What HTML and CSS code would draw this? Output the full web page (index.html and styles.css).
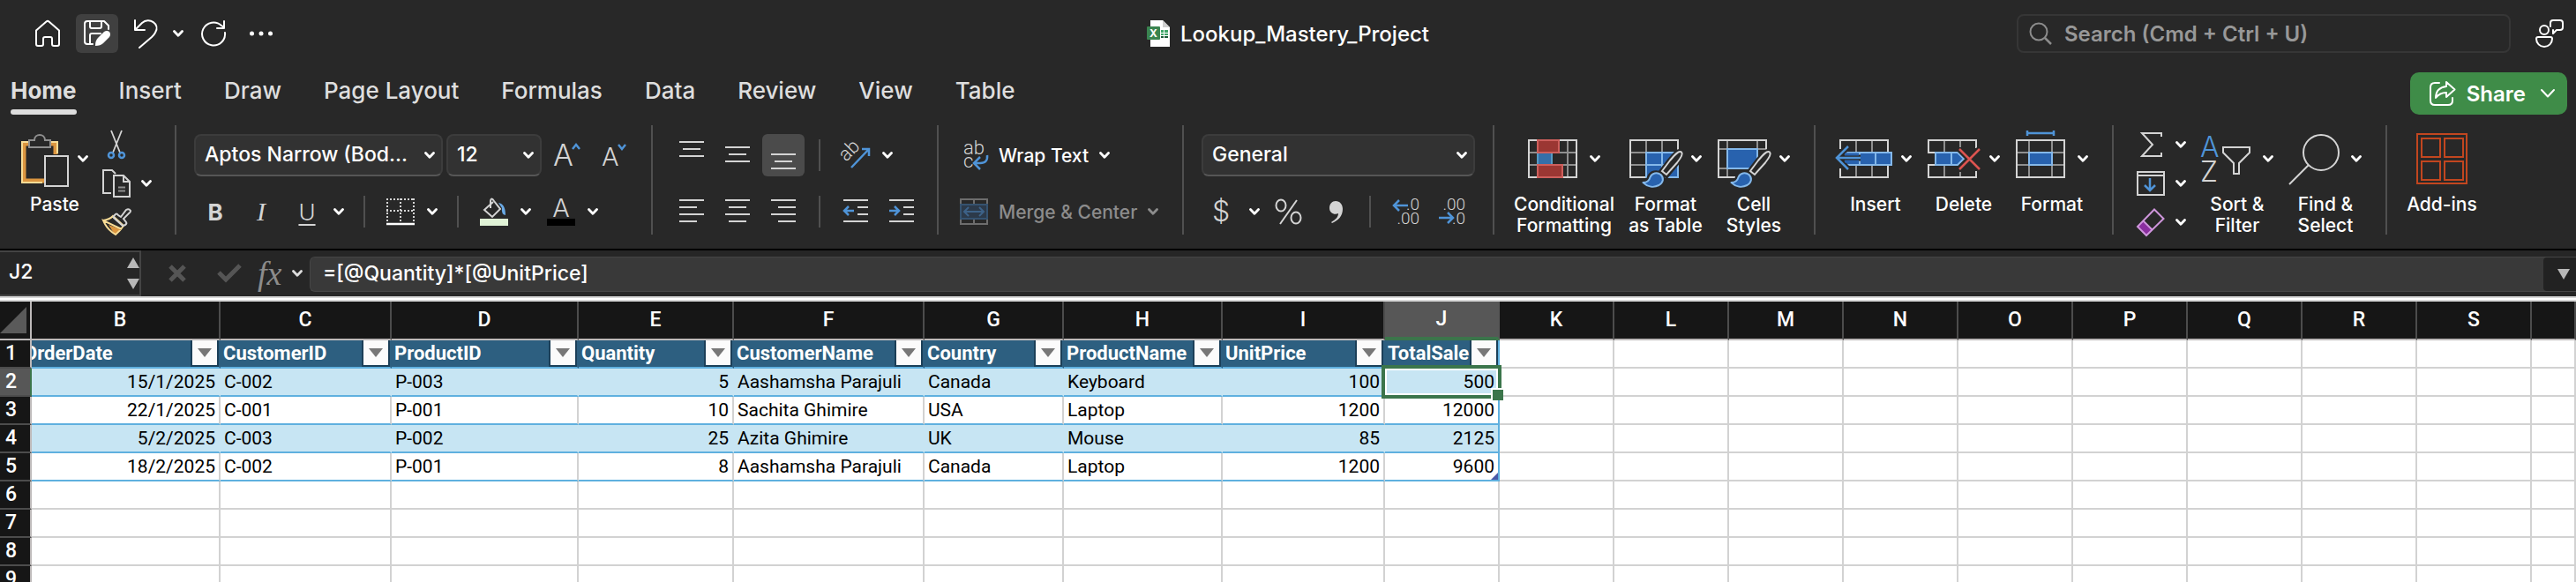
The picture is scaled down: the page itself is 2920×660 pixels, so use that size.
FILE: index.html
```html
<!DOCTYPE html>
<html lang="en">
<head>
<meta charset="utf-8">
<title>Lookup_Mastery_Project</title>
<link rel="stylesheet" href="styles.css">
</head>
<body>
<svg class="defs" aria-hidden="true">
  <symbol id="chev" viewBox="0 0 12 8"><path d="M1.5 1.5 6 6.2l4.500-4.700" fill="none" stroke="currentColor" stroke-width="2.800" stroke-linecap="round" stroke-linejoin="round"/></symbol>
  <symbol id="brush" viewBox="0 0 64 68">
    <path d="M59 24.500c2 2-1 7-5 12L42 51l-6-4 10-13c5-6 10-12 13-9.500z" fill="#282828" stroke="#282828" stroke-width="6"/>
    <path d="M15 59c5 0 7-2 8-6 2-5 8-6 12-3 4 4 3 10-2 12-6 3-13 2-18-3z" fill="#282828" stroke="#282828" stroke-width="6"/>
    <path d="M59 24.500c2 2-1 7-5 12L42 50l-5-4 9-12c5-6 10-12 13-9.500z" fill="#282828" stroke="#d4d4d4" stroke-width="2"/>
    <path d="M15.500 59c4.500 0 7-2 8-6 2-5 8-6 12-3 4 4 3 9-2 12-6 3-13 2-18-3z" fill="#2862ae" stroke="#84b8ea" stroke-width="2" stroke-linejoin="round"/>
  </symbol>
</svg>

<header class="titlebar">
  <div class="quick">
    <button class="plain" aria-label="Home"><svg width="28" height="32" viewBox="0 0 28 32"><path class="w" d="M1 12.500 12.500 2.500q1.500-1.200 3 0L27 12.500V28q0 2-2 2h-4q-2 0-2-2v-6q0-2-2-2h-6q-2 0-2 2v6q0 2-2 2H3q-2 0-2-2z"/></svg></button>
    <button class="plain save" aria-label="Save"><svg width="32" height="32" viewBox="0 0 32 32"><path class="w" d="M11 28H5q-3 0-3-3V5q0-3 3-3h19l5 5v4M8 2v6q0 2 2 2h9q2 0 2-2V2M8 28V18q0-2 2-2h10"/><path d="M14 30q0-6 3-9l7-7q3-2 6 0 2 3 0 6l-7 7q-3 3-9 3z" fill="#fff"/></svg></button>
    <button class="plain" aria-label="Undo"><svg width="26" height="34" viewBox="0 0 26 34"><path class="w" d="M1 2v11h11M1.500 12.500 9 5c8-7 21 1 15 11-1 2-2 3-4 5L6 33"/></svg></button>
    <button class="plain" aria-label="Undo history"><svg class="chev"><use href="#chev"/></svg></button>
    <button class="plain" aria-label="Redo"><svg width="32" height="32" viewBox="0 0 32 32"><path class="w" d="M29 15A13 13 0 1 1 25 7l3 2M28 2v8h-8"/></svg></button>
    <button class="plain" aria-label="More"><svg width="40" height="8" viewBox="0 0 40 8" fill="#fff"><circle cx="9.500" cy="4" r="2.500"/><circle cx="20" cy="4" r="2.500"/><circle cx="30.500" cy="4" r="2.500"/></svg></button>
  </div>
  <h1 class="doc">
    <svg width="26" height="30" viewBox="0 0 26 30"><path d="M4 0h14l8 8v22H4z" fill="#fff"/><path d="M18 0v8h8z" fill="#cfcfcf"/><path d="M16 11h3v3h-3zM20 11h4v3h-4zM16 15h3v2h-3zM20 15h4v2h-4z" fill="#3fa568"/><path d="M16 18h3v2h-3zM20 18h4v2h-4z" fill="#1d5a38"/><rect y="7" width="15" height="15" rx="1" fill="#3a8450"/><text x="7.500" y="19" class="t-x">X</text></svg>
    <span>Lookup_Mastery_Project</span>
  </h1>
  <div class="right">
    <label class="search">
      <svg width="26" height="26" viewBox="0 0 26 26"><circle cx="11" cy="11" r="9.500" fill="none" stroke="#8c8c8c" stroke-width="2"/><path d="m18 18 7 7" stroke="#8c8c8c" stroke-width="2.500"/></svg>
      <input type="text" placeholder="Search (Cmd + Ctrl + U)" aria-label="Search">
    </label>
    <button class="plain" aria-label="Comments"><svg width="32" height="34" viewBox="0 0 32 34"><circle class="w" cx="10" cy="13" r="5"/><path class="w" d="M3 21h14q2 0 2 2c0 5-4 9-9 9s-9-4-9-9q0-2 2-2zM17 9V5q0-3 3-3h8q3 0 3 3v5q0 3-3 3h-4l-4 4v-4"/></svg></button>
  </div>
</header>

<nav class="tabs">
  <a class="tab on" href="#home">Home</a>
  <a class="tab" href="#insert">Insert</a>
  <a class="tab" href="#draw">Draw</a>
  <a class="tab" href="#layout">Page Layout</a>
  <a class="tab" href="#formulas">Formulas</a>
  <a class="tab" href="#data">Data</a>
  <a class="tab" href="#review">Review</a>
  <a class="tab" href="#view">View</a>
  <a class="tab" href="#table">Table</a>
  <button class="share"><svg width="30" height="30" viewBox="0 0 30 30"><path class="w" d="M11 3H6Q1 3 1 8v15q0 5 5 5h15q5 0 5-5v-3"/><path class="w" d="M19 2v5C11 8 7 12 7 20c3-4 6-6 12-6v5l9.500-8.500z" stroke-linejoin="round"/></svg><span>Share</span><svg width="16" height="10" viewBox="0 0 16 10"><path class="w" d="m1 1 7 7.500L15 1"/></svg></button>
</nav>

<section class="ribbon">
  <div class="group big-group clip">
    <button class="big"><span class="pic"><svg width="54" height="64" viewBox="0 0 54 64"><path d="M26 57H3V15h36v12" fill="none" stroke="#dc9640" stroke-width="5"/><path d="M24 59H1V13h40v13" fill="none" stroke="#f8dc96" stroke-width="2"/><path d="M9 19v-8h6c0-8 12-8 12 0h6v8z" fill="#282828" stroke="#8f8f8f" stroke-width="2"/><path class="l" fill-opacity="1" d="M27 29h26v34H27z"/></svg><svg class="chev"><use href="#chev"/></svg></span><span>Paste</span></button>
    <div class="stack">
      <button class="plain" aria-label="Cut"><svg width="32" height="32" viewBox="0 0 32 32"><path d="M10 0 20 25M22 0 12 25" stroke="#d4d4d4" stroke-width="1.800"/><circle cx="10" cy="28" r="3" class="b"/><circle cx="22" cy="28" r="3" class="b"/></svg></button>
      <button class="plain split near" aria-label="Copy"><svg width="32" height="32" viewBox="0 0 32 32"><path class="l" d="M10 27H1V1h10l4 4M13 7h11l7 7v17H13zM24 7v7h7"/><path d="M18 20.500h8M18 24.500h8" stroke="#8f8f8f" stroke-width="2"/></svg><svg class="chev"><use href="#chev"/></svg></button>
      <button class="plain" aria-label="Format Painter"><svg width="32" height="32" viewBox="0 0 32 32"><path d="m7 19 14 5-7 6z" fill="#dc9640"/><path d="M1 14q7-1 11-5l12 11q-4 6-9 10Q5 24 1 14l21 10" fill="none" stroke="#f8dc96" stroke-width="2"/><path class="l" fill="#282828" d="M14 8q2-3 4 0l3 2 6-8q3-2 5 1 0 2-2 3l-6 6 3 4q1 2-1 3t-3 1L13 11q-1-1 1-3z"/></svg></button>
    </div>
  </div>

  <div class="group font">
    <div class="row">
      <span class="pick face"><select aria-label="Font"><option>Aptos Narrow (Bod...</option></select><svg class="chev"><use href="#chev"/></svg></span>
      <span class="pick size"><select aria-label="Font size"><option>12</option></select><svg class="chev"><use href="#chev"/></svg></span>
      <button class="plain grow" aria-label="Increase font size"><svg width="32" height="32" viewBox="0 0 32 32"><text x="0" y="28" class="t-a">A</text><path class="b" d="m22 9 4-5 4 5"/></svg></button>
      <button class="plain shrink" aria-label="Decrease font size"><svg width="32" height="32" viewBox="0 0 32 32"><text x="1" y="28" class="t-b">A</text><path class="b" d="m20 4 4 5 4-5"/></svg></button>
    </div>
    <div class="row tools">
      <div class="trio"><button class="plain cell bold">B</button><button class="plain cell ital">I</button><button class="plain cell split"><span class="under">U</span><svg class="chev"><use href="#chev"/></svg></button></div>
      <i class="sep"></i>
      <button class="plain split" aria-label="Borders"><svg width="32" height="32" viewBox="0 0 32 32"><path d="M0 2h32M0 15h32M1 1v28M16 1v28M31 1v28" fill="none" stroke="#d4d4d4" stroke-width="2" stroke-dasharray="2 2"/><path d="M0 30h32" stroke="#fff" stroke-width="2.500"/></svg><svg class="chev"><use href="#chev"/></svg></button>
      <i class="sep"></i>
      <div class="pair">
      <button class="plain split" aria-label="Fill colour"><svg width="32" height="32" viewBox="0 0 32 32"><path class="l" d="M15 5 5 14l9 8 9-9-7-9q-3-5-4 0v8"/><path d="M21 6q8 1 8 14-5-1-4-8z" fill="#6aaae6"/><path d="M0 24h32v8H0z" fill="#e0f2d6"/></svg><svg class="chev"><use href="#chev"/></svg></button>
      <button class="plain split" aria-label="Font colour"><svg width="32" height="32" viewBox="0 0 32 32"><text x="16" y="22" class="t-b mid">A</text><path d="M0 24h32v8H0z" fill="#000"/></svg><svg class="chev"><use href="#chev"/></svg></button>
      </div>
    </div>
  </div>

  <div class="group align">
    <div class="row">
      <div class="trio">
        <button class="tile" aria-label="Top align"><svg width="28" height="32" viewBox="0 0 28 32"><path class="l" d="M0 1h28M4 9h20M0 17h28"/></svg></button>
        <button class="tile" aria-label="Middle align"><svg width="28" height="32" viewBox="0 0 28 32"><path class="l" d="M0 7h28M4 15h20M0 23h28"/></svg></button>
        <button class="tile on" aria-label="Bottom align"><svg width="28" height="32" viewBox="0 0 28 32"><path class="l" d="M0 15h28M4 23h20M0 31h28"/></svg></button>
      </div>
      <i class="sep"></i>
      <button class="plain split" aria-label="Orientation"><svg width="32" height="32" viewBox="0 0 32 32"><text x="0" y="0" class="t-ab" transform="translate(5 24) rotate(-45)">ab</text><path class="b" d="M11 30 31 9M23 9h8v8"/></svg><svg class="chev"><use href="#chev"/></svg></button>
    </div>
    <div class="row">
      <div class="trio">
        <button class="tile" aria-label="Align left"><svg width="28" height="28" viewBox="0 0 28 28"><path class="l" d="M0 1h28M0 9h20M0 17h28M0 25h20"/></svg></button>
        <button class="tile" aria-label="Center"><svg width="28" height="28" viewBox="0 0 28 28"><path class="l" d="M0 1h28M4 9h20M0 17h28M4 25h20"/></svg></button>
        <button class="tile" aria-label="Align right"><svg width="28" height="28" viewBox="0 0 28 28"><path class="l" d="M0 1h28M8 9h20M0 17h28M8 25h20"/></svg></button>
      </div>
      <i class="sep"></i>
      <div class="indents">
      <button class="plain" aria-label="Decrease indent"><svg width="32" height="28" viewBox="0 0 32 28"><path class="l" d="M2 1h28M18 9h12M18 17h12M2 25h28"/><path class="b" d="M14 13H3M8 8l-5 5 5 5"/></svg></button>
      <button class="plain" aria-label="Increase indent"><svg width="32" height="28" viewBox="0 0 32 28"><path class="l" d="M2 1h28M18 9h12M18 17h12M2 25h28"/><path class="b" d="M2 13h11M8 8l5 5-5 5"/></svg></button>
      </div>
    </div>
  </div>

  <div class="group wrap">
    <button class="row line"><svg width="32" height="32" viewBox="0 0 32 32"><text x="4" y="15" class="t-ab">ab</text><text x="4" y="30" class="t-ab">c</text><path class="b" d="M31 16q1 9-8 9h-6M23 18l-7 7 7 7"/></svg><span>Wrap Text</span><svg class="chev"><use href="#chev"/></svg></button>
    <button class="row line off" disabled><svg width="32" height="32" viewBox="0 0 32 32"><path d="M1 8V2h30v6M16 2v6M1 24v6h30v-6M16 24v6" fill="none" stroke="#6d6d6d" stroke-width="2"/><path d="M1 8h30v16H1z" fill="#2c3a4a" stroke="#35526f" stroke-width="2"/><path d="M5 16h22M10 11l-5 5 5 5M22 11l5 5-5 5" fill="none" stroke="#3d6288" stroke-width="2"/></svg><span>Merge &amp; Center</span><svg class="chev"><use href="#chev"/></svg></button>
  </div>

  <div class="group number">
    <span class="pick kind"><select aria-label="Number format"><option>General</option></select><svg class="chev"><use href="#chev"/></svg></span>
    <div class="row nums">
      <button class="plain split" aria-label="Currency"><svg width="32" height="36" viewBox="0 0 32 36"><text x="16" y="29" class="t-n mid">$</text></svg><svg class="chev"><use href="#chev"/></svg></button>
      <button class="plain" aria-label="Percent"><svg width="32" height="32" viewBox="0 0 32 32"><g fill="none" stroke="#d4d4d4" stroke-width="2"><ellipse cx="8" cy="9" rx="5.500" ry="6.500"/><ellipse cx="25" cy="23" rx="5.500" ry="6.500"/><path d="M26 3 7 30"/></g></svg></button>
      <button class="plain" aria-label="Comma style"><svg width="32" height="32" viewBox="0 0 32 32"><path d="M16 4c5 0 8 4 8 9 0 8-5 13-12 16l-1-1c5-3 8-6 8-10-4 2-10 0-10-6 0-5 3-8 7-8z" fill="#d4d4d4"/></svg></button>
      <i class="sep"></i>
      <button class="plain" aria-label="Increase decimal"><svg width="32" height="32" viewBox="0 0 32 32"><text x="31" y="14" class="t-d">.0</text><text x="31" y="30" class="t-d">.00</text><path class="b" d="M18 9H2M8 3 2 9l6 6"/></svg></button>
      <button class="plain" aria-label="Decrease decimal"><svg width="32" height="32" viewBox="0 0 32 32"><text x="31" y="14" class="t-d">.00</text><text x="31" y="30" class="t-d">.0</text><path class="b" d="M1 23h16M11 17l6 6-6 6"/></svg></button>
    </div>
  </div>

  <div class="group big-group styles">
    <button class="big"><span class="pic"><svg width="56" height="64" viewBox="0 0 56 64"><path class="g" d="M11 11v42M45 11v42M1 25h54M1 39h54"/><path d="M28 26h16v12H28z" fill="#282828"/><path class="l" d="M1 11h54v42H1z"/><path d="M11 11h24v14H11zM11 39h28v14H11z" fill="#9b3733" stroke="#ce5f5c" stroke-width="2"/><path d="M10 26h18v12H10z" fill="#356fa9"/><path d="M11 26v12M27 26v12" stroke="#559bc4" stroke-width="2"/></svg><svg class="chev"><use href="#chev"/></svg></span><span>Conditional<br>Formatting</span></button>
    <button class="big"><span class="pic"><svg width="56" height="64" viewBox="0 0 56 64"><path class="g" d="M19 11v42M37 11v42M1 25h54M1 39h54"/><path class="l" d="M1 11h54v42H1z"/><path d="M19 25h36v28H19z" fill="#2862ae" stroke="#84b8ea" stroke-width="2"/><path d="M37 25v28M19 39h36" stroke="#84b8ea" stroke-width="2"/><use href="#brush" width="64" height="68"/></svg><svg class="chev"><use href="#chev"/></svg></span><span>Format<br>as Table</span></button>
    <button class="big"><span class="pic"><svg width="56" height="64" viewBox="0 0 56 64"><path class="g" d="M11 11v42M45 11v42M1 21h54M1 43h54"/><path class="l" d="M1 11h54v42H1z"/><path d="M11 21h34v22H11z" fill="#2862ae" stroke="#84b8ea" stroke-width="2"/><path d="M46 40 58 22v34H30z" fill="#282828"/><use href="#brush" width="64" height="68"/></svg><svg class="chev"><use href="#chev"/></svg></span><span>Cell<br>Styles</span></button>
  </div>

  <div class="group big-group cells">
    <button class="big"><span class="pic"><svg width="56" height="64" viewBox="0 0 56 64"><path class="g" d="M19 11v42M37 11v42"/><path class="l" d="M1 11h54v42H1z"/><path d="M-2 21h13v22H-2z" fill="#282828"/><path d="M5 25h54v14H5z" fill="#2862ae" stroke="#84b8ea" stroke-width="2"/><path d="M23 25v14M41 25v14" stroke="#84b8ea" stroke-width="2"/><path d="M24 31H-2M10 18-3 31l13 13" fill="none" stroke="#282828" stroke-width="7"/><path d="M6 27h16M6 35h16" stroke="#2862ae" stroke-width="3"/><path class="b" d="M24 31H-2M10 18-3 31l13 13"/></svg><svg class="chev"><use href="#chev"/></svg></span><span>Insert</span></button>
    <button class="big"><span class="pic"><svg width="56" height="64" viewBox="0 0 56 64"><path class="g" d="M19 11v14M19 39v14M37 11v8M37 47v6"/><path class="l" d="M8 25H1V11h54v9M8 39H1v14h54v-7"/><path d="M9 25h25l7 7-7 7H9z" fill="#2862ae" stroke="#84b8ea" stroke-width="2"/><path d="M27 25v14" stroke="#84b8ea" stroke-width="2"/><path d="m36 21 23 23M59 21 36 44" stroke="#282828" stroke-width="7"/><path d="m36 21 23 23M59 21 36 44" stroke="#dc5450" stroke-width="2.500"/></svg><svg class="chev"><use href="#chev"/></svg></span><span>Delete</span></button>
    <button class="big"><span class="pic"><svg width="56" height="64" viewBox="0 0 56 64"><path class="g" d="M15 11v42M41 11v42M1 25h54M1 39h54"/><path class="l" d="M1 11h54v42H1z"/><path d="M15 25h26v14H15z" fill="#2862ae" stroke="#84b8ea" stroke-width="2"/><path class="b" d="M13 3h30M13 0v6M43 0v6"/></svg><svg class="chev"><use href="#chev"/></svg></span><span>Format</span></button>
  </div>

  <div class="group big-group edit">
    <div class="stack">
      <button class="plain split near" aria-label="AutoSum"><svg width="32" height="32" viewBox="0 0 32 32"><path class="l" d="M28 7V3H6l12 13L6 29h22v-4"/></svg><svg class="chev"><use href="#chev"/></svg></button>
      <button class="plain split near" aria-label="Fill"><svg width="32" height="32" viewBox="0 0 32 32"><path class="l" d="M1 3h30v26H1zM1 7h30"/><path class="b" d="M15 10v14M9 18l6 6 6-6"/></svg><svg class="chev"><use href="#chev"/></svg></button>
      <button class="plain split near" aria-label="Clear"><svg width="32" height="32" viewBox="0 0 32 32"><path d="m7 14 11 11-7 6L1 21z" fill="#8b2fa0"/><path d="M20 1.500 30.500 12 11 31 1 21zM7 14l11 11" fill="none" stroke="#cf96dc" stroke-width="2"/></svg><svg class="chev"><use href="#chev"/></svg></button>
    </div>
    <button class="big"><span class="pic"><svg width="56" height="64" viewBox="0 0 56 64"><text x="-1" y="30" class="t-s t-blue">A</text><text x="-1" y="58" class="t-s">Z</text><path class="l" d="M25 19h30v6L43 37v12h-6V37L25 25z"/></svg><svg class="chev"><use href="#chev"/></svg></span><span>Sort &amp;<br>Filter</span></button>
    <button class="big"><span class="pic"><svg width="56" height="64" viewBox="0 0 56 64"><circle class="l" cx="36" cy="25" r="20"/><path class="l" d="M22 39 0 61"/></svg><svg class="chev"><use href="#chev"/></svg></span><span>Find &amp;<br>Select</span></button>
  </div>

  <div class="group big-group last">
    <button class="big"><span class="pic"><svg width="58" height="64" viewBox="0 0 58 64"><path d="M1 4h56v56H1zM6 9h21v21H6zM32 9h21v21H32zM6 35h21v21H6zM32 35h21v21H32z" fill="none" stroke="#c2461f" stroke-width="2"/></svg></span><span>Add-ins</span></button>
  </div>
</section>

<section class="formula">
  <div class="namebox">
    <input type="text" value="J2" aria-label="Name box">
    <svg width="14" height="36" viewBox="0 0 14 36" fill="#b8b8b8"><path d="m7 0 7 12H0zM7 36l7-12H0z"/></svg>
  </div>
  <div class="fxtools">
    <button class="plain" disabled aria-label="Cancel"><svg width="20" height="20" viewBox="0 0 20 20"><path d="m2 2 16 16M18 2 2 18" stroke="#555" stroke-width="5"/></svg></button>
    <button class="plain" disabled aria-label="Enter"><svg width="28" height="22" viewBox="0 0 28 22"><path d="m2 10 8 8L26 2" fill="none" stroke="#555" stroke-width="5"/></svg></button>
    <button class="plain fx"><i>fx</i><svg class="chev"><use href="#chev"/></svg></button>
  </div>
  <div class="entry">
    <input type="text" value="=[@Quantity]*[@UnitPrice]" aria-label="Formula">
    <button class="plain expand" aria-label="Expand formula bar"><svg width="14" height="12" viewBox="0 0 14 12" fill="#b8b8b8"><path d="M0 0h14L7 12z"/></svg></button>
  </div>
</section>

<main class="sheet">
<table>
  <colgroup><col class="c0"><col class="cb"><col class="cc"><col class="cd"><col class="ce"><col class="cf"><col class="cg"><col class="ch"><col class="ci"><col class="cj"><col class="cj"><col class="cj"><col class="cj"><col class="cj"><col class="cj"><col class="cj"><col class="cj"><col class="cj"><col class="cj"><col></colgroup>
  <thead>
    <tr><th class="corner"><svg width="30" height="30" viewBox="0 0 30 30"><path d="M30 0v30H0z" fill="#5a5a5a"/></svg></th><th class="cut">B</th><th>C</th><th>D</th><th>E</th><th>F</th><th>G</th><th>H</th><th>I</th><th class="sel">J</th><th>K</th><th>L</th><th>M</th><th>N</th><th>O</th><th>P</th><th>Q</th><th>R</th><th>S</th><th></th></tr>
  </thead>
  <tbody>
    <tr class="names"><th>1</th>
      <td class="first"><div><span>OrderDate</span><button aria-label="Filter OrderDate"></button></div></td>
      <td><div><span>CustomerID</span><button aria-label="Filter CustomerID"></button></div></td>
      <td><div><span>ProductID</span><button aria-label="Filter ProductID"></button></div></td>
      <td><div><span>Quantity</span><button aria-label="Filter Quantity"></button></div></td>
      <td><div><span>CustomerName</span><button aria-label="Filter CustomerName"></button></div></td>
      <td><div><span>Country</span><button aria-label="Filter Country"></button></div></td>
      <td><div><span>ProductName</span><button aria-label="Filter ProductName"></button></div></td>
      <td><div><span>UnitPrice</span><button aria-label="Filter UnitPrice"></button></div></td>
      <td class="edge"><div><span>TotalSale</span><button aria-label="Filter TotalSale"></button></div></td>
      <td></td><td></td><td></td><td></td><td></td><td></td><td></td><td></td><td></td><td></td></tr>
    <tr class="data band"><th class="sel">2</th><td class="n">15/1/2025</td><td>C-002</td><td>P-003</td><td class="n">5</td><td>Aashamsha Parajuli</td><td>Canada</td><td>Keyboard</td><td class="n">100</td><td class="n edge active">500</td><td></td><td></td><td></td><td></td><td></td><td></td><td></td><td></td><td></td><td></td></tr>
    <tr class="data"><th>3</th><td class="n">22/1/2025</td><td>C-001</td><td>P-001</td><td class="n">10</td><td>Sachita Ghimire</td><td>USA</td><td>Laptop</td><td class="n">1200</td><td class="n edge">12000</td><td></td><td></td><td></td><td></td><td></td><td></td><td></td><td></td><td></td><td></td></tr>
    <tr class="data band"><th>4</th><td class="n">5/2/2025</td><td>C-003</td><td>P-002</td><td class="n">25</td><td>Azita Ghimire</td><td>UK</td><td>Mouse</td><td class="n">85</td><td class="n edge">2125</td><td></td><td></td><td></td><td></td><td></td><td></td><td></td><td></td><td></td><td></td></tr>
    <tr class="data"><th>5</th><td class="n">18/2/2025</td><td>C-002</td><td>P-001</td><td class="n">8</td><td>Aashamsha Parajuli</td><td>Canada</td><td>Laptop</td><td class="n">1200</td><td class="n edge corner-mark">9600</td><td></td><td></td><td></td><td></td><td></td><td></td><td></td><td></td><td></td><td></td></tr>
    <tr><th>6</th><td></td><td></td><td></td><td></td><td></td><td></td><td></td><td></td><td></td><td></td><td></td><td></td><td></td><td></td><td></td><td></td><td></td><td></td><td></td></tr>
    <tr><th>7</th><td></td><td></td><td></td><td></td><td></td><td></td><td></td><td></td><td></td><td></td><td></td><td></td><td></td><td></td><td></td><td></td><td></td><td></td><td></td></tr>
    <tr><th>8</th><td></td><td></td><td></td><td></td><td></td><td></td><td></td><td></td><td></td><td></td><td></td><td></td><td></td><td></td><td></td><td></td><td></td><td></td><td></td></tr>
    <tr><th>9</th><td></td><td></td><td></td><td></td><td></td><td></td><td></td><td></td><td></td><td></td><td></td><td></td><td></td><td></td><td></td><td></td><td></td><td></td><td></td></tr>
  </tbody>
</table>
</main>
</body>
</html>
```
FILE: styles.css
```css
* { box-sizing: border-box; }

body {
  margin: 0;
  height: 100vh;
  display: flex;
  flex-direction: column;
  overflow: hidden;
  background: #282828;
  color: #fff;
  font-family: Inter, "Liberation Sans", sans-serif;
  font-size: 21px;
  font-weight: 500;
}

button, input, select { font: inherit; color: inherit; }
svg { display: block; flex: none; overflow: visible; }
.defs { position: absolute; width: 0; height: 0; }
.chev { width: 12px; height: 8px; }
.w { fill: none; stroke: #fff; stroke-width: 2; stroke-linejoin: round; stroke-linecap: round; }
.l { fill: none; stroke: #d4d4d4; stroke-width: 2; }
.g { fill: none; stroke: #8f8f8f; stroke-width: 2; }
.b { fill: none; stroke: #4f94d8; stroke-width: 2.5; }

svg text { fill: #d4d4d4; font-family: Inter, sans-serif; font-weight: 300; }
svg .t-x { fill: #fff; font-size: 12px; font-weight: 700; text-anchor: middle; }
svg .t-a { font-size: 34px; }
svg .t-b { font-size: 29px; }
svg .t-n { font-size: 32px; }
svg .t-ab { font-family: Roboto, sans-serif; font-size: 22px; }
svg .t-d { font-family: Roboto, sans-serif; font-size: 19px; text-anchor: end; }
svg .t-s { font-size: 32px; }
svg .mid { text-anchor: middle; }
svg .t-blue { fill: #4f94d8; }

.plain {
  display: flex;
  align-items: center;
  justify-content: center;
  padding: 0;
  border: 0;
  background: none;
}
.split { gap: 14px; }
.split.near { gap: 12px; }

/* Title bar */
.titlebar {
  flex: none;
  display: grid;
  grid-template-columns: 1fr auto 1fr;
  align-items: center;
  height: 76px;
  padding: 0 14px;
}
.quick { display: flex; align-items: center; gap: 18px; padding-left: 26px; }
.save { width: 48px; height: 44px; border-radius: 6px; background: #404040; }
.doc {
  display: flex;
  align-items: center;
  gap: 12px;
  margin: 0;
  font-size: 24px;
  font-weight: 500;
}
.right { display: flex; justify-content: flex-end; align-items: center; gap: 28px; }
.search {
  display: flex;
  align-items: center;
  gap: 14px;
  width: 560px;
  height: 44px;
  padding: 0 12px;
  border: 2px solid #363636;
  border-radius: 8px;
}
.search input {
  flex: 1;
  min-width: 0;
  padding: 0;
  border: 0;
  background: none;
  font-size: 24px;
  font-weight: 600;
}
.search input::placeholder { color: #989898; opacity: 1; }

/* Tabs */
.tabs {
  flex: none;
  display: flex;
  align-items: flex-start;
  gap: 48px;
  height: 66px;
  padding: 6px 10px 0 12px;
}
.tab {
  position: relative;
  height: 48px;
  padding-top: 6px;
  color: #dedede;
  font-size: 26px;
  line-height: 30px;
  text-decoration: none;
}
.tab.on { font-weight: 700; }
.tab.on::after {
  content: "";
  position: absolute;
  left: 0;
  right: 0;
  bottom: 0;
  height: 6px;
  border-radius: 3px;
  background: #dedede;
}
.share {
  display: flex;
  align-items: center;
  gap: 12px;
  height: 48px;
  margin-left: auto;
  padding: 0 14px 0 22px;
  border: 0;
  border-radius: 10px;
  background: #3f8c48;
  font-size: 24px;
  font-weight: 600;
}
.share svg:last-child { margin-left: 5px; }

/* Ribbon */
.ribbon { flex: none; display: flex; height: 142px; padding-bottom: 16px; border-bottom: 2px solid #000; }
.group {
  flex: none;
  display: flex;
  flex-direction: column;
  gap: 16px;
  padding-top: 10px;
  border-right: 2px solid #505050;
}
.row { display: flex; align-items: center; height: 48px; }
.sep { width: 2px; height: 36px; background: #505050; }
.big-group { flex-direction: row; align-items: flex-start; gap: 16px; padding-top: 6px; }
.big {
  display: flex;
  flex-direction: column;
  align-items: center;
  gap: 8px;
  min-width: 84px;
  padding: 0;
  border: 0;
  background: none;
  line-height: 24px;
  text-align: center;
  white-space: nowrap;
}
.pic { display: flex; align-items: center; gap: 14px; height: 64px; }
.stack { display: flex; flex-direction: column; align-items: flex-start; gap: 12px; }
.clip { width: 200px; padding-left: 24px; }
.clip .big { min-width: 76px; }
.clip .pic { gap: 10px; }

.font { width: 540px; padding-left: 20px; }
.pick { display: grid; align-items: center; }
.pick select {
  grid-area: 1 / 1;
  width: 100%;
  height: 48px;
  padding: 0 10px 2px;
  border: 2px solid #3c3c3c;
  border-bottom-color: #565656;
  border-radius: 8px;
  background: #323232;
  appearance: none;
  font-size: 23px;
}
.pick .chev { grid-area: 1 / 1; justify-self: end; margin-right: 9px; pointer-events: none; }
.face { width: 282px; }
.size { width: 108px; margin-left: 4px; }
.kind { width: 310px; }
.grow { margin-left: 13px; }
.shrink { margin-left: 22px; }
.tools { gap: 22px; padding-left: 8px; }
.tools .sep + * { margin-left: 2px; }
.tools .trio { gap: 20px; }
.trio, .pair { display: flex; }
.pair { gap: 18px; }
.cell { min-width: 32px; height: 40px; font-size: 26px; color: #d4d4d4; }
.bold { font-weight: 700; }
.ital { font-family: "Liberation Serif", serif; font-style: italic; font-size: 30px; font-weight: 400; }
.under { width: 32px; font-weight: 300; text-decoration: underline; text-decoration-thickness: 2px; text-underline-offset: 4px; }
.cell .chev { color: #fff; }

.align { width: 324px; padding-left: 20px; }
.align .trio { gap: 4px; }
.align .sep { margin: 0 24px 0 16px; }
.tile {
  display: flex;
  align-items: center;
  justify-content: center;
  width: 48px;
  height: 48px;
  padding: 0;
  border: 0;
  border-radius: 6px;
  background: none;
}
.tile.on { background: #4b4b4b; }
.indents { display: flex; gap: 20px; }

.wrap { width: 278px; padding-left: 24px; }
.line { gap: 12px; padding: 0; border: 0; background: none; white-space: nowrap; }
.off { color: #8c8c8c; }

.number { padding: 10px 20px 0; }
.nums { padding-left: 6px; }
.nums .split { gap: 16px; }
.nums > :nth-child(2) { margin-left: 16px; }
.nums > :nth-child(3) { margin-left: 22px; }
.nums .sep { margin: 0 24px 0 22px; }
.nums > :last-child { margin-left: 20px; }

.styles { padding-left: 22px; padding-right: 26px; }
.cells { padding-left: 26px; padding-right: 26px; }
.edit { padding-left: 26px; padding-right: 26px; }
.last { padding-left: 20px; border-right: 0; }

/* Formula bar */
.formula { flex: none; display: flex; height: 52px; background: #262626; font-size: 23px; }
.namebox {
  display: flex;
  align-items: center;
  width: 160px;
  border: 2px solid #444;
  border-left: 0;
}
.namebox input { flex: 1; min-width: 0; padding: 0 0 4px 10px; border: 0; background: none; }
.fxtools { display: flex; align-items: center; width: 191px; padding-left: 31px; }
.fxtools button:nth-child(2) { margin-left: 35px; }
.fx { gap: 12px; margin-left: 18px; color: #ddd; }
.fx i { font-family: "Liberation Serif", serif; font-size: 38px; font-weight: 400; line-height: 44px; color: #8c8c8c; }
.entry {
  flex: 1;
  display: flex;
  height: 40px;
  margin-top: 7px;
  border: 1px solid #454545;
  border-right: 0;
  border-radius: 6px 0 0 6px;
  background: #393939;
}
.entry input { flex: 1; min-width: 0; padding: 0 14px 2px; border: 0; background: none; }
.expand { width: 37px; padding-left: 8px; border-radius: 4px 0 0 4px; background: #222; }

/* Grid */
.sheet {
  flex: 1;
  min-height: 0;
  overflow: hidden;
  border-top: 6px double #d8d8d8;
  background: #fff;
  color: #000;
  font-family: Roboto, "Liberation Sans", sans-serif;
  font-size: 21px;
  font-weight: 400;
}
table { width: 100%; table-layout: fixed; border-collapse: separate; border-spacing: 0; }
.c0 { width: 36px; }
.cb { width: 214px; }
.cc { width: 194px; }
.cd { width: 212px; }
.ce { width: 176px; }
.cf { width: 216px; }
.cg { width: 158px; }
.ch { width: 180px; }
.ci { width: 184px; }
.cj { width: 130px; }
thead th {
  height: 44px;
  padding: 0;
  border-right: 2px solid #4c4c4c;
  border-bottom: 2px solid #bdb9b9;
  background: #161616;
  color: #fff;
  font-size: 23px;
  font-weight: 500;
  line-height: 28px;
}
thead .cut { padding-right: 12px; }
thead .corner { border-right-color: #bdb9b9; }
thead .sel { background: #575757; border-right-color: #575757; border-bottom: 4px solid #3b754b; }
tbody th {
  height: 32px;
  padding: 0 0 0 6px;
  border-right: 2px solid #bdb9b9;
  border-bottom: 2px solid #4c4c4c;
  background: #161616;
  color: #fff;
  font-size: 23px;
  font-weight: 500;
  line-height: 28px;
  text-align: left;
}
tbody th.sel { background: #575757; border-right-color: #3b754b; }
td {
  height: 32px;
  padding: 0 4px;
  border-right: 2px solid #d2d2d2;
  border-bottom: 2px solid #d2d2d2;
  line-height: 28px;
  white-space: nowrap;
}
.n { text-align: right; }
.data td:nth-child(-n+10) { border-bottom-color: #5fb0df; }
.band td:nth-child(-n+10) { background: #c7e5f3; border-right-color: #c7e5f3; }
.names td:nth-child(-n+10) {
  padding: 0;
  border-right-color: #2d5f80;
  border-bottom-color: #5fb0df;
  background: #2d5f80;
  color: #fff;
  font-size: 22px;
  font-weight: 700;
}
.names div { display: flex; height: 30px; padding-left: 3px; overflow: hidden; }
.names span { flex: 1; min-width: 0; line-height: 30px; }
.names .first span { margin-left: -12px; }
.names button {
  flex: none;
  display: flex;
  justify-content: center;
  align-items: center;
  width: 32px;
  padding: 0;
  border: 2px solid #1b3f58;
  border-top: 0;
  background: #fbfbfb;
}
.names button::after {
  content: "";
  border: 8px solid transparent;
  border-top: 10px solid #777;
  border-bottom: 0;
}
tbody tr td.edge:nth-child(10) { border-right-color: #5fb0df; }
.active, .corner-mark { position: relative; }
.active::before {
  content: "";
  position: absolute;
  inset: -4px;
  border: 4px solid #3b754b;
  outline: 2px solid #fff;
  outline-offset: -6px;
}
.active::after {
  content: "";
  position: absolute;
  right: -6px;
  bottom: -6px;
  width: 12px;
  height: 12px;
  border: solid #fff;
  border-width: 2px 0 0 2px;
  background: #3b754b;
}
.corner-mark::after {
  content: "";
  position: absolute;
  right: 0;
  bottom: 0;
  border: 4px solid #4a5aa8;
  border-top-color: transparent;
  border-left-color: transparent;
}
```
